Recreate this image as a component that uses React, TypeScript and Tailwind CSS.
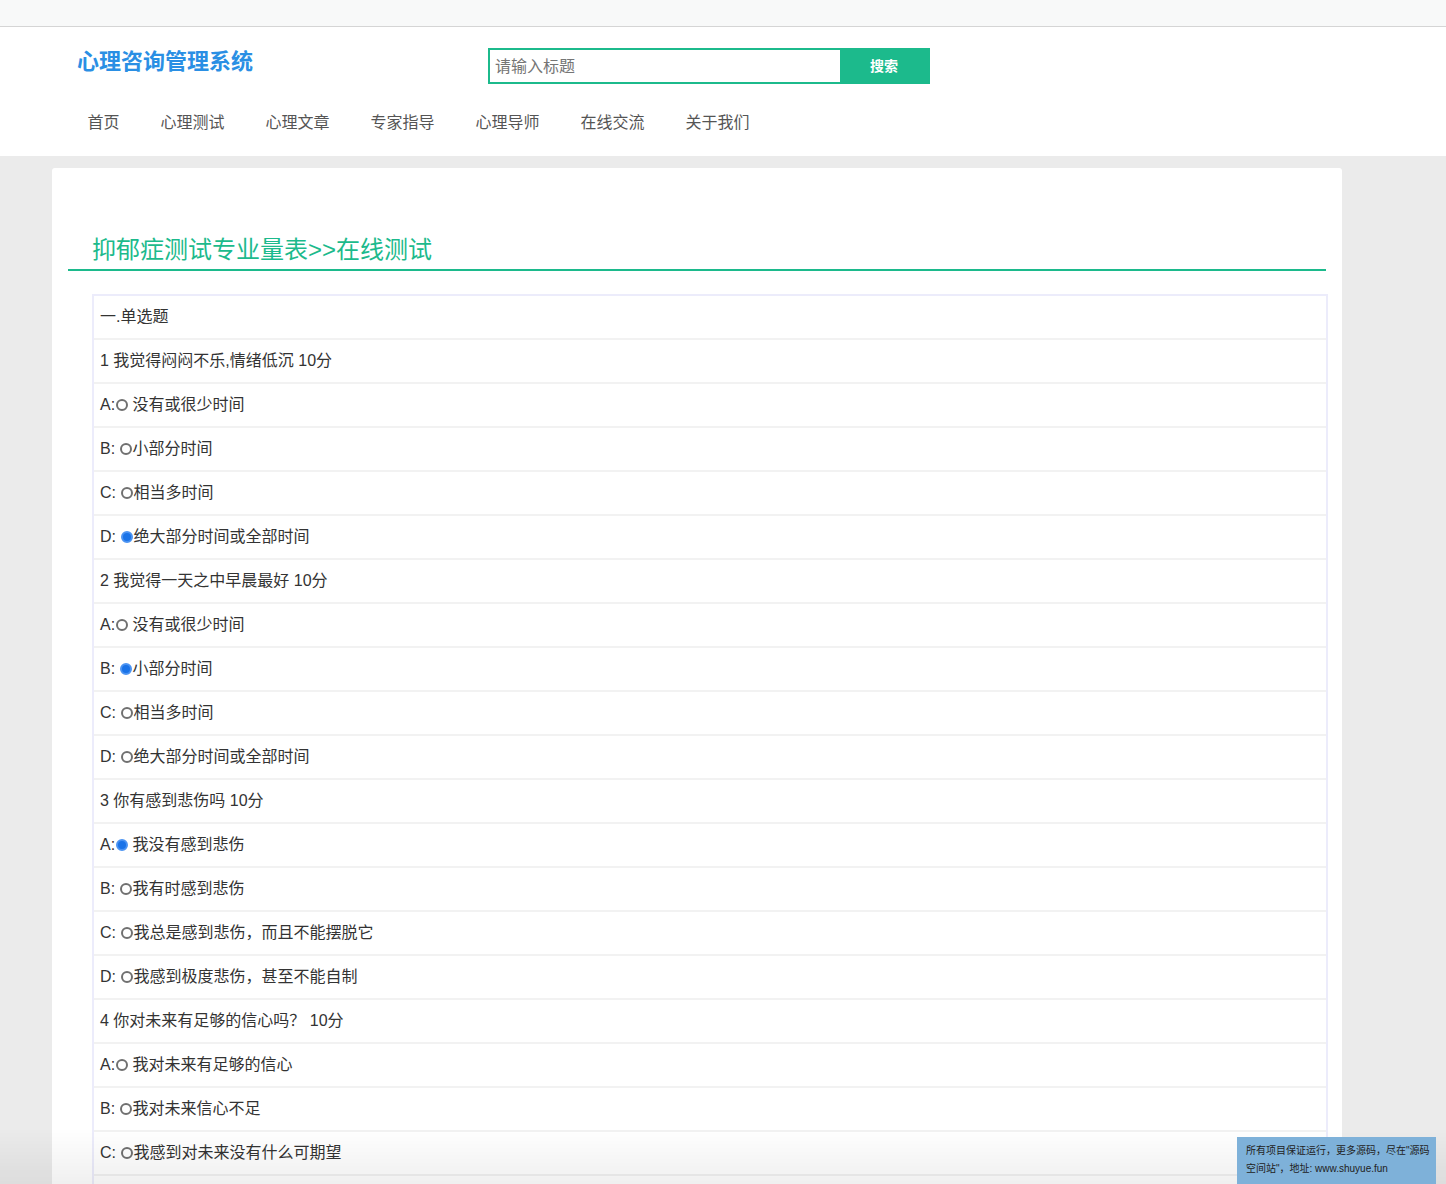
import React from "react"

const font = { fontFamily: '"Liberation Sans", "Noto Sans CJK SC", sans-serif' }

const nav = ["首页", "心理测试", "心理文章", "专家指导", "心理导师", "在线交流", "关于我们"]

type Row = { text: string; label?: string; checked?: boolean }

const rows: Row[] = [
  { text: "一.单选题" },
  { text: "1 我觉得闷闷不乐,情绪低沉 10分" },
  { label: "A:", text: " 没有或很少时间" },
  { label: "B: ", text: "小部分时间" },
  { label: "C: ", text: "相当多时间" },
  { label: "D: ", text: "绝大部分时间或全部时间", checked: true },
  { text: "2 我觉得一天之中早晨最好 10分" },
  { label: "A:", text: " 没有或很少时间" },
  { label: "B: ", text: "小部分时间", checked: true },
  { label: "C: ", text: "相当多时间" },
  { label: "D: ", text: "绝大部分时间或全部时间" },
  { text: "3 你有感到悲伤吗 10分" },
  { label: "A:", text: " 我没有感到悲伤", checked: true },
  { label: "B: ", text: "我有时感到悲伤" },
  { label: "C: ", text: "我总是感到悲伤，而且不能摆脱它" },
  { label: "D: ", text: "我感到极度悲伤，甚至不能自制" },
  { text: "4 你对未来有足够的信心吗？ 10分" },
  { label: "A:", text: " 我对未来有足够的信心" },
  { label: "B: ", text: "我对未来信心不足" },
  { label: "C: ", text: "我感到对未来没有什么可期望" },
  { label: "D: ", text: "我感到前景黯淡，情况不会好转" },
]

function Radio({ checked }: { checked?: boolean }) {
  if (checked) {
    return (
      <span className="inline-block w-[12px] h-[12px] rounded-full bg-[#1a73e8] border-[2px] border-[#4b93f2] mx-[0.5px]" />
    )
  }
  return (
    <span className="inline-block w-[12px] h-[12px] rounded-full border-2 border-[#707070] bg-white mx-[0.5px]" />
  )
}

export default function App() {
  return (
    <div className="min-h-screen bg-[#ebebeb] text-[#333]" style={font}>
      <div className="h-[27px] bg-[#f8f9f9] border-b border-[#d5d5d5]" />

      <header className="bg-white h-[129px] px-[67px]">
        <div className="flex items-start pt-[21px]">
          <h1 className="ml-[10px] text-[22px] leading-[26px] font-bold text-[#2a8fe4] mt-[1px]">
            心理咨询管理系统
          </h1>
          <div className="ml-[235px] flex h-[36px]">
            <div className="w-[354px] border-2 border-[#1cba8c] flex items-center px-[5px] pt-[1px] text-[16px] text-[#757575]">
              请输入标题
            </div>
            <div className="w-[88px] bg-[#1cba8c] text-white text-[14px] font-bold flex items-center justify-center pr-[4px]">
              搜索
            </div>
          </div>
        </div>
        <nav className="flex mt-[23px]">
          {nav.map((n) => (
            <span key={n} className="px-[20.5px] text-[16px] leading-[32px] text-[#555]">
              {n}
            </span>
          ))}
        </nav>
      </header>

      <main className="pt-[12px] px-[52px]">
        <div className="bg-white rounded-[3px] w-[1290px] pb-[40px]">
          <div className="px-[16px] pt-[65px]">
            <h2 className="pl-[24px] text-[24px] leading-[34px] text-[#1cba8c] border-b-2 border-[#1cba8c] pb-[2px]">
              抑郁症测试专业量表&gt;&gt;在线测试
            </h2>
          </div>
          <div className="ml-[40px] mr-[14px] mt-[23px] border-2 border-[#ececfb]">
            {rows.map((r, i) => (
              <div
                key={i}
                className="h-[44px] border-b-2 border-[#f2f2f2] flex items-center px-[6px] text-[16px] text-[#333] whitespace-pre"
              >
                {r.label !== undefined ? (
                  <>
                    <span>{r.label}</span>
                    <Radio checked={r.checked} />
                    <span>{r.text}</span>
                  </>
                ) : (
                  <span>{r.text}</span>
                )}
              </div>
            ))}
          </div>
        </div>
      </main>

      <div className="fixed left-0 right-0 bottom-0 h-[56px] bg-linear-to-b from-transparent to-black/[0.06] pointer-events-none" />

      <div className="fixed right-[10px] bottom-0 w-[199px] h-[47px] bg-[#7eb1d9] pl-[9px] pt-[5px] text-[10px] leading-[18px] text-[#222]">
        <div>所有项目保证运行，更多源码，尽在"源码</div>
        <div>空间站"，地址: www.shuyue.fun</div>
      </div>
    </div>
  )
}
